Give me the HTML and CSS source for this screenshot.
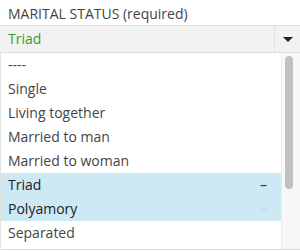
FILE: index.html
```html
<!DOCTYPE html>
<html lang="en">
<head>
  <meta charset="UTF-8">
  <meta name="viewport" content="width=device-width, initial-scale=1.0">
  <title>Marital status</title>
  <link rel="stylesheet" href="styles.css">
</head>
<body>
  <div class="field">
    <label class="field-label">MARITAL STATUS (required)</label>
    <div class="select">
      <span class="select-value">Triad</span>
      <span class="select-toggle"><span class="caret"></span></span>
    </div>
    <div class="dropdown">
      <ul class="options">
        <li>----</li>
        <li>Single</li>
        <li>Living together</li>
        <li>Married to man</li>
        <li>Married to woman</li>
        <li class="selected">Triad <span class="remove">&ndash;</span></li>
        <li class="selected">Polyamory <span class="remove faded">&ndash;</span></li>
        <li>Separated</li>
      </ul>
      <div class="scrollbar"><div class="thumb"></div></div>
    </div>
  </div>
</body>
</html>
```

FILE: styles.css
```css
body {
  margin: 0;
  font-family: 'Open Sans', sans-serif;
  font-size: 14px;
  color: #444;
  background: #fff;
}

.field-label {
  display: block;
  padding: 3px 8px 0;
  height: 22px;
  line-height: 22px;
  color: #444;
}

.select {
  display: flex;
  height: 26px;
  border-top: 1px solid #ddd;
  border-bottom: 1px solid #ddd;
  background-color: #f2f2f2;
}

.select-value {
  flex: 1;
  padding-left: 8px;
  line-height: 26px;
  color: #3d9a2b;
}

.select-toggle {
  width: 25px;
  border-left: 1px solid #e2e2e2;
  display: flex;
  align-items: center;
  justify-content: center;
}

.caret {
  width: 0;
  height: 0;
  border-left: 5px solid transparent;
  border-right: 5px solid transparent;
  border-top: 5px solid #222;
}

.dropdown {
  display: flex;
  height: 196px;
  border-left: 1px solid #e4e4e4;
  border-bottom: 1px solid #ddd;
}

.options {
  flex: 1;
  list-style: none;
  margin: 0;
  padding: 0;
}

.options li {
  display: flex;
  justify-content: space-between;
  height: 24px;
  line-height: 24px;
  padding: 0 14px 0 7px;
}

.options li.selected {
  background-color: #cce9f4;
  color: #222;
}

.remove {
  color: #333;
}

.remove.faded {
  color: #b8d6e2;
}

.scrollbar {
  width: 15px;
  background-color: #f7f7f7;
  border-left: 1px solid #ececec;
  padding: 3px 0 0 3px;
}

.thumb {
  width: 8px;
  height: 133px;
  border-radius: 4px;
  background-color: #c1c1c1;
}
```
